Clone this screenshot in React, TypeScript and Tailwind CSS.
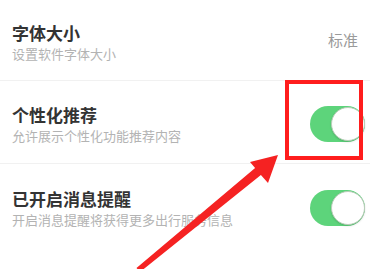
import React from 'react';

const font = { fontFamily: '"Noto Sans CJK SC", "Noto Sans", sans-serif' };

function Toggle() {
  return (
    <div className="relative w-[55px] h-[36px] rounded-full bg-[#5dd47b] shrink-0">
      <div className="absolute right-0 top-[1px] w-[34px] h-[34px] rounded-full bg-white border border-[#b9cdb9] shadow-[0_1px_2px_rgba(0,0,0,0.15)]" />
    </div>
  );
}

function Row({ title, desc, right, className }: { title: string; desc: string; right: React.ReactNode; className: string }) {
  return (
    <div className={`flex items-center justify-between pl-3 ${className}`}>
      <div className="flex flex-col">
        <span className="text-[17px] leading-[24px] font-bold text-[#333333]">{title}</span>
        <span className="text-[13px] leading-[18px] text-[#b3b3b3]">{desc}</span>
      </div>
      {right}
    </div>
  );
}

export default function App() {
  return (
    <div className="relative w-[370px] h-[269px] bg-white overflow-hidden" style={font}>
      <Row
        title="字体大小"
        desc="设置软件字体大小"
        className="pt-[21px] pb-[17px] pr-3"
        right={<span className="text-[15px] text-[#9a9a9a] -mt-[4px]">标准</span>}
      />
      <div className="h-px bg-[#f1f1f1]" />
      <Row
        title="个性化推荐"
        desc="允许展示个性化功能推荐内容"
        className="pt-[22px] pb-[18px] pr-[5px]"
        right={<Toggle />}
      />
      <div className="h-px bg-[#f1f1f1]" />
      <Row
        title="已开启消息提醒"
        desc="开启消息提醒将获得更多出行服务信息"
        className="pt-[23px] pb-[18px] pr-[5px]"
        right={<Toggle />}
      />

      {/* annotation overlay */}
      <div className="absolute left-[285px] top-[80px] w-[78px] h-[80px] border-[4px] border-[#ff1d1d]" />
      <svg className="absolute left-0 top-0" width="370" height="269" viewBox="0 0 370 269">
        <polygon
          points="278,155 250,162 255.1,168.1 136.5,268 140,272 260.9,175.1 268,183"
          fill="#f52222"
        />
      </svg>
    </div>
  );
}
